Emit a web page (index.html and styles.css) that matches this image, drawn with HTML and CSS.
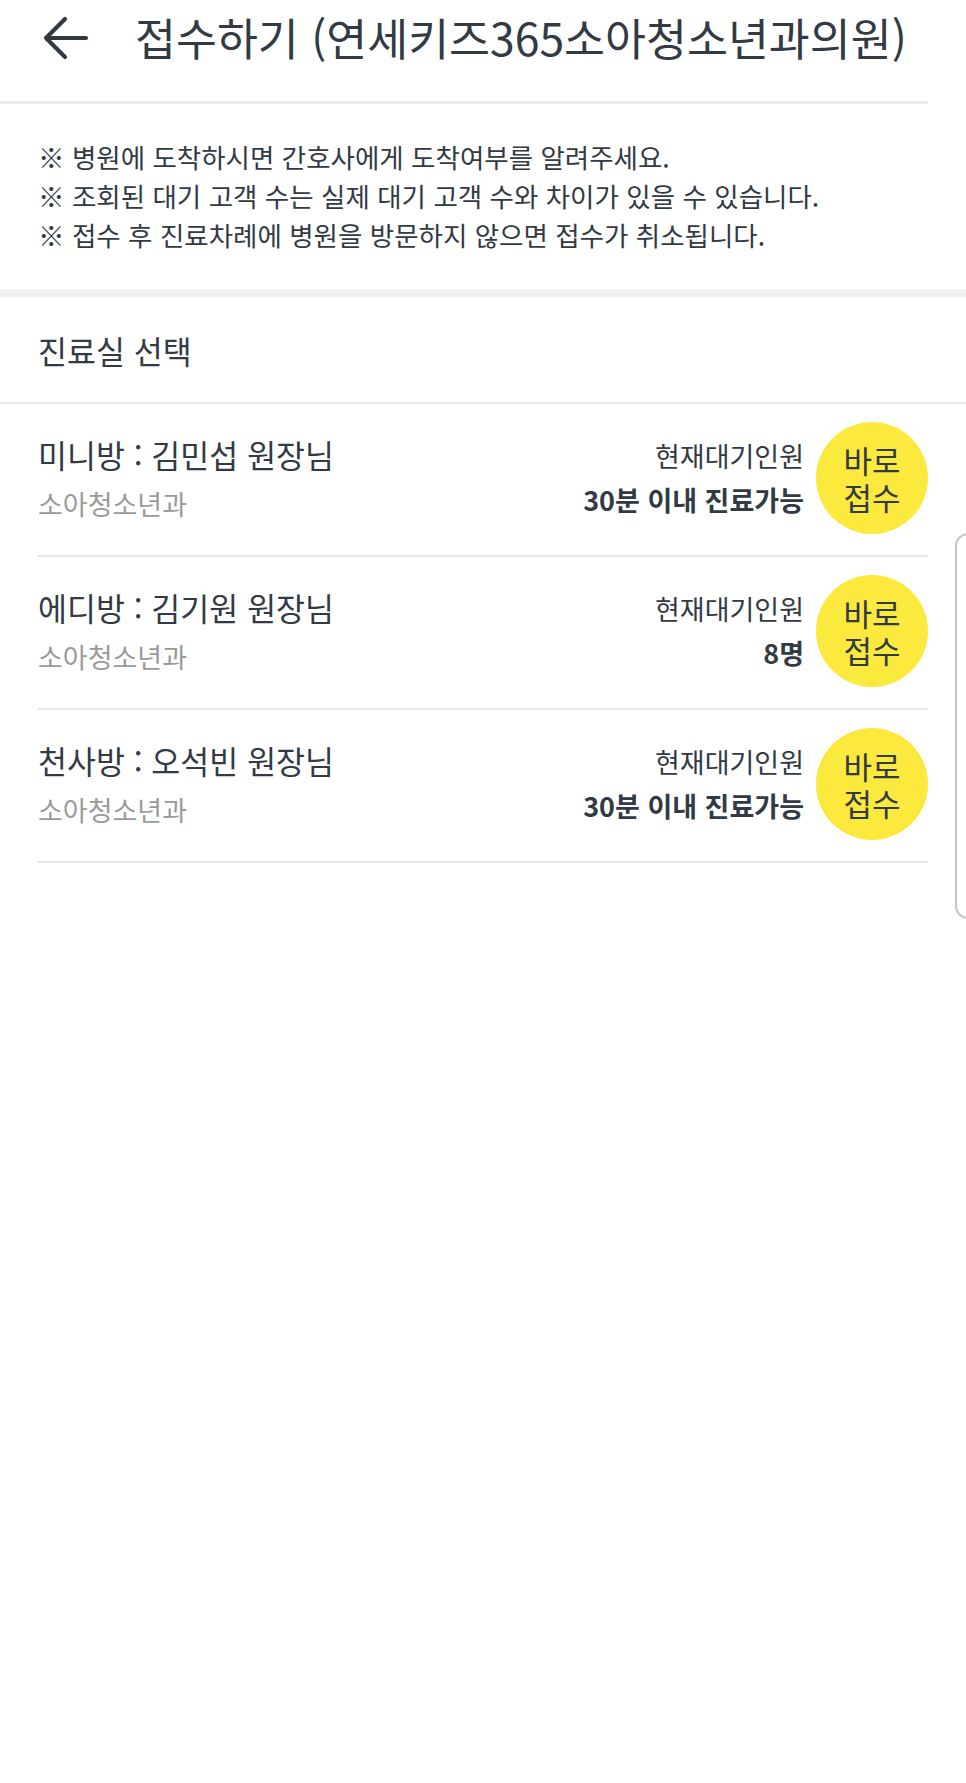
FILE: index.html
```html
<!DOCTYPE html>
<html lang="ko">
<head>
  <meta charset="UTF-8" />
  <meta name="viewport" content="width=device-width, initial-scale=1.0"/>
  <title>접수하기</title>
  <link rel="stylesheet" href="styles.css">
</head>
<body>

  <!-- Header -->
  <header class="top-bar">
    <svg class="back-icon" width="46" height="44" viewBox="0 0 46 44">
      <path d="M43 22H3M22 3L3 22l19 19" fill="none" stroke="#323a44" stroke-width="4.2" stroke-linecap="round" stroke-linejoin="round"/>
    </svg>
    <h1 class="page-title">접수하기 (연세키즈365소아청소년과의원)</h1>
  </header>

  <!-- Notices -->
  <div class="notice">
    <p>※ 병원에 도착하시면 간호사에게 도착여부를 알려주세요.</p>
    <p>※ 조회된 대기 고객 수는 실제 대기 고객 수와 차이가 있을 수 있습니다.</p>
    <p>※ 접수 후 진료차례에 병원을 방문하지 않으면 접수가 취소됩니다.</p>
  </div>

  <h2 class="section-title">진료실 선택</h2>

  <ul class="room-list">
    <li class="room">
      <div class="room-info">
        <div class="room-name">미니방 : 김민섭 원장님</div>
        <div class="room-dept">소아청소년과</div>
      </div>
      <div class="room-wait">
        <div class="wait-label">현재대기인원</div>
        <div class="wait-value">30분 이내 진료가능</div>
      </div>
      <button class="quick-btn"><span>바로</span><span>접수</span></button>
    </li>
    <li class="room">
      <div class="room-info">
        <div class="room-name">에디방 : 김기원 원장님</div>
        <div class="room-dept">소아청소년과</div>
      </div>
      <div class="room-wait">
        <div class="wait-label">현재대기인원</div>
        <div class="wait-value">8명</div>
      </div>
      <button class="quick-btn"><span>바로</span><span>접수</span></button>
    </li>
    <li class="room">
      <div class="room-info">
        <div class="room-name">천사방 : 오석빈 원장님</div>
        <div class="room-dept">소아청소년과</div>
      </div>
      <div class="room-wait">
        <div class="wait-label">현재대기인원</div>
        <div class="wait-value">30분 이내 진료가능</div>
      </div>
      <button class="quick-btn"><span>바로</span><span>접수</span></button>
    </li>
  </ul>

  <!-- scroll handle at the screen edge -->
  <div class="scroll-handle"></div>

</body>
</html>
```

FILE: styles.css
```css
html {
  overflow: hidden;
}

body {
  margin: 0;
  font-family: "Noto Sans CJK KR", "Noto Sans", sans-serif;
  color: #323a44;
  background: #fff;
  position: relative;
  min-height: 1783px;
}

.top-bar {
  display: flex;
  align-items: flex-start;
  height: 101px;
  padding-left: 43px;
  margin-right: 38px;
  border-bottom: 3px solid #ececec;
}

.back-icon {
  flex: none;
  margin-top: 16px;
}

.page-title {
  margin: 15px 0 0 46px;
  font-size: 44.5px;
  font-weight: 400;
  line-height: 1;
  white-space: nowrap;
}

.notice {
  padding: 33px 38px 35px;
  border-bottom: 8px solid #f1f1f1;
}

.notice p {
  margin: 0;
  font-size: 26.5px;
  line-height: 39px;
  white-space: nowrap;
}

.section-title {
  margin: 0;
  padding: 33px 38px 32px;
  font-size: 31.5px;
  font-weight: 400;
  line-height: 40px;
  border-bottom: 2px solid #e9e9e9;
}

.room-list {
  list-style: none;
  margin: 0;
  padding: 0 38px;
}

.room {
  display: flex;
  align-items: flex-start;
  padding: 18px 0 21px;
  border-bottom: 2px solid #e6e6e6;
}

.room-info {
  flex: 1;
  margin-top: 12px;
}

.room-name {
  font-size: 31.5px;
  line-height: 40px;
}

.room-dept {
  font-size: 27px;
  line-height: 36px;
  margin-top: 12px;
  color: #9a9a9a;
}

.room-wait {
  text-align: right;
  margin: 16px 12px 0 0;
}

.wait-label {
  font-size: 27px;
  line-height: 36px;
}

.wait-value {
  font-size: 27px;
  line-height: 36px;
  margin-top: 8px;
  font-weight: 700;
}

.quick-btn {
  display: flex;
  flex-direction: column;
  align-items: center;
  justify-content: center;
  flex: none;
  width: 112px;
  height: 112px;
  border: none;
  border-radius: 50%;
  background: #fce93e;
  color: #323a44;
  font-family: inherit;
  font-size: 31px;
  padding: 0;
  cursor: pointer;
}

.quick-btn span {
  display: block;
  height: 37px;
  line-height: 37px;
}

.scroll-handle {
  position: absolute;
  left: 955px;
  top: 533px;
  width: 30px;
  height: 382px;
  border: 2px solid #c4c4c4;
  border-radius: 13px;
  background: #fff;
}
```
